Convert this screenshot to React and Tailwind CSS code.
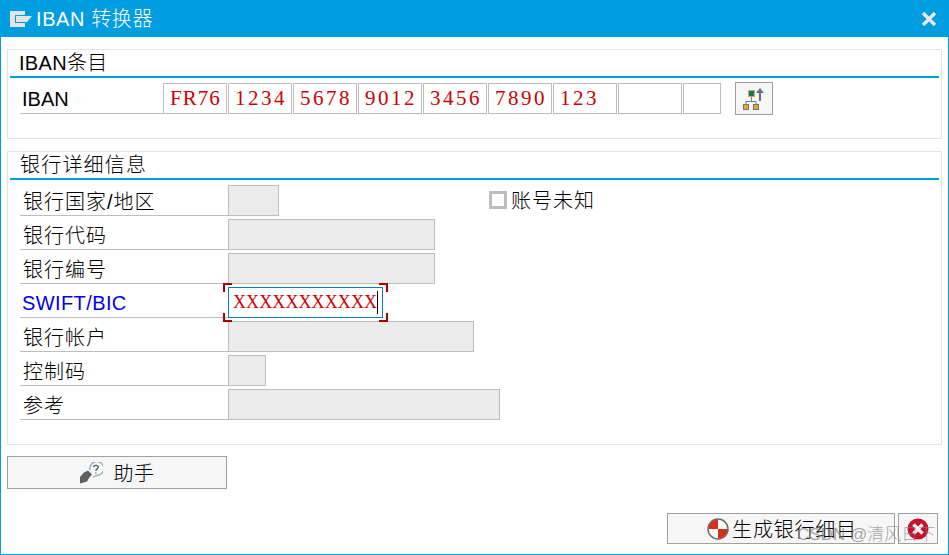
import React from 'react';

const ibanParts = ['FR76', '1234', '5678', '9012', '3456', '7890', '123', ''];

const bankRows = [
  { label: '银行国家/地区', width: 'w-[51px]' },
  { label: '银行代码', width: 'w-[207px]' },
  { label: '银行编号', width: 'w-[207px]' },
  { label: 'SWIFT/BIC', focus: true },
  { label: '银行帐户', width: 'w-[246px]' },
  { label: '控制码', width: 'w-[38px]' },
  { label: '参考', width: 'w-[272px]' },
];

const TitleIcon = () => (
  <svg width="22" height="16" viewBox="0 0 22 16">
    <path d="M0 0H15V4H5V12H15V16H0Z" fill="#e4e4e4" />
    <path d="M6 5H22L17 11H6Z" fill="#e4e4e4" />
  </svg>
);

const CloseIcon = () => (
  <svg width="16" height="16" viewBox="0 0 16 16">
    <path d="M2 2L14 14M14 2L2 14" stroke="#e8e8e8" strokeWidth="3.4" />
  </svg>
);

const TreeIcon = () => (
  <svg width="22" height="22" viewBox="0 0 22 22">
    <path d="M8.500 9V13.500M3 16V13.500H13V16" fill="none" stroke="#6f7f8f" strokeWidth="1" />
    <rect x="5.500" y="2.500" width="6" height="6" fill="#0b7f45" stroke="#d9a27a" />
    <rect x="0.500" y="16.500" width="5" height="5" fill="#f0a800" stroke="#66789a" />
    <rect x="10.500" y="16.500" width="5" height="5" fill="#f0a800" stroke="#66789a" />
    <path d="M16 13V5H13L17 0L21 5H18V13Z" fill="#66707c" />
  </svg>
);

const HelpIcon = () => (
  <svg width="23" height="22" viewBox="0 0 23 22">
    <path d="M0 21.500V15L4 10.500L8 8.500L12 12.500L9 16L7 19.500Z" fill="#5f5f5f" />
    <path d="M10 8A7 7 0 1 1 17 13.500L13 15" fill="none" stroke="#8fa8c8" strokeWidth="1.300" />
    <path d="M13.500 5C14 2.800 18.500 3 18.300 5.200C18.100 7 16 6.800 15.800 9M15.800 10.500V11.500" fill="none" stroke="#555" strokeWidth="1.300" />
  </svg>
);

const ExecuteIcon = () => (
  <svg width="22" height="22" viewBox="0 0 22 22">
    <circle cx="11" cy="11" r="10" fill="#fff" stroke="#6b6b6b" strokeWidth="1.500" />
    <path d="M11 1.500A9.500 9.500 0 0 0 1.500 11H11Z" fill="#d5301f" />
    <path d="M11 20.500A9.500 9.500 0 0 0 20.500 11H11Z" fill="#d5301f" />
  </svg>
);

const CancelIcon = () => (
  <svg width="22" height="22" viewBox="0 0 22 22">
    <circle cx="11" cy="11" r="10.500" fill="#c8102e" />
    <path d="M6.500 6.500L15.500 15.500M15.500 6.500L6.500 15.500" stroke="#f4f4f4" strokeWidth="3.400" />
  </svg>
);

const GroupTitle = ({ children }) => (
  <div className="h-[28px] mx-[2px] pl-[10px] border-b-2 border-[#009de0] text-[20px] leading-[27px] text-black">
    {children}
  </div>
);

const FocusField = () => (
  <div className="relative w-[155px] h-[31px] border border-[#0a7cc0] bg-white pl-[4px] flex items-center text-[18px] text-[#cc0000] font-['Liberation_Serif',serif] tracking-[0.1px]">
    <span>XXXXXXXXXXX</span>
    <span className="w-px h-[23px] bg-black" />
    <span className="absolute -left-[6px] -top-[5px] w-[9px] h-[9px] border-l-2 border-t-2 border-[#a80000]" />
    <span className="absolute -right-[6px] -top-[5px] w-[9px] h-[9px] border-r-2 border-t-2 border-[#a80000]" />
    <span className="absolute -left-[6px] -bottom-[5px] w-[9px] h-[9px] border-l-2 border-b-2 border-[#a80000]" />
    <span className="absolute -right-[6px] -bottom-[5px] w-[9px] h-[9px] border-r-2 border-b-2 border-[#a80000]" />
  </div>
);

export default function App() {
  return (
    <div className="relative w-[949px] h-[555px] overflow-hidden bg-white border-x border-b border-[#009de0] font-['Liberation_Sans','Noto_Sans_CJK_SC',sans-serif] font-light">
      <header className="h-[37px] -mx-px bg-[#009de0] flex items-center pl-[10px] pr-[12px] text-white">
        <TitleIcon />
        <span className="ml-[4px] text-[20px] tracking-[0.6px]">IBAN 转换器</span>
        <span className="ml-auto flex"><CloseIcon /></span>
      </header>

      <div className="px-[6px] pt-[12px]">
        <section className="w-[935px] h-[90px] border border-[#e3e3e3]">
          <GroupTitle>
            <span className="-ml-px tracking-[0.3px]">IBAN条目</span>
          </GroupTitle>
          <div className="flex mt-[5px] ml-[12px]">
            <div className="w-[143px] h-[31px] border-b border-[#bdbdbd] pl-[2px] text-[20px] leading-[32px] text-black">IBAN</div>
            <div className="flex gap-px">
              {ibanParts.map((part, index) => (
                <div key={index} className={index === 0
                  ? 'w-[64px] h-[31px] border border-[#bdbdbd] pl-[6px] text-[21px] leading-[28px] text-[#cc0000] font-[\'Liberation_Serif\',serif] tracking-[1px]'
                  : 'w-[64px] h-[31px] border border-[#bdbdbd] pl-[6px] text-[21px] leading-[28px] text-[#cc0000] font-[\'Liberation_Serif\',serif] tracking-[2.5px]'}>
                  {part}
                </div>
              ))}
              <div className="w-[38px] h-[31px] border border-[#bdbdbd]" />
            </div>
            <button className="ml-[14px] -mt-px w-[38px] h-[33px] border border-[#a0a0a0] bg-[#f6f6f6] flex items-center justify-center">
              <TreeIcon />
            </button>
          </div>
        </section>

        <section className="relative w-[935px] h-[294px] mt-[12px] border border-[#e3e3e3]">
          <GroupTitle><span className="tracking-[1.200px]">银行详细信息</span></GroupTitle>
          <div className="flex flex-col gap-[3px] mt-[5px] ml-[12px]">
            {bankRows.map((row) => (
              <div key={row.label} className="flex">
                <div className={row.focus
                  ? 'w-[208px] h-[31px] border-b border-[#bdbdbd] pl-[2px] text-[20px] leading-[32px] text-[#0000ee] tracking-[0.4px]'
                  : 'w-[208px] h-[31px] border-b border-[#bdbdbd] pl-[3px] text-[20px] leading-[34px] text-black tracking-[1px]'}>
                  {row.label}
                </div>
                {row.focus
                  ? <FocusField />
                  : <div className={`${row.width} h-[31px] border border-[#bdbdbd] bg-[#ebebeb]`} />}
                {row.label === '银行国家/地区' && (
                  <label className="ml-[210px] mt-[6px] h-[18px] flex items-center gap-[4px] text-[20px] text-black tracking-[1px]">
                    <span className="w-[18px] h-[18px] border-[3px] border-[#bdbdbd] bg-white" />
                    <span className="pt-[2px]">账号未知</span>
                  </label>
                )}
              </div>
            ))}
          </div>
        </section>

        <button className="w-[220px] h-[33px] mt-[11px] border border-[#a0a0a0] bg-[#f6f6f6] flex items-center justify-center gap-[11px] text-[20px] text-black">
          <HelpIcon />
          <span className="pt-[2px] tracking-[0.5px]">助手</span>
        </button>

        <div className="flex justify-end gap-[3px] mt-[24px] pr-[4px]">
          <button className="w-[228px] h-[31px] border border-[#a0a0a0] bg-[#f6f6f6] flex items-center justify-center gap-[3px] pl-[2px] text-[20px] text-black">
            <ExecuteIcon />
            <span className="pt-[2px] tracking-[0.8px]">生成银行细目</span>
          </button>
          <button className="w-[40px] h-[31px] border border-[#a0a0a0] bg-[#f6f6f6] flex items-center justify-center">
            <CancelIcon />
          </button>
        </div>
      </div>

      <span className="absolute left-[796px] top-[524px] text-[17px] leading-[22px] text-[#808080]/70 whitespace-nowrap">CSDN @清风日下</span>
    </div>
  );
}
